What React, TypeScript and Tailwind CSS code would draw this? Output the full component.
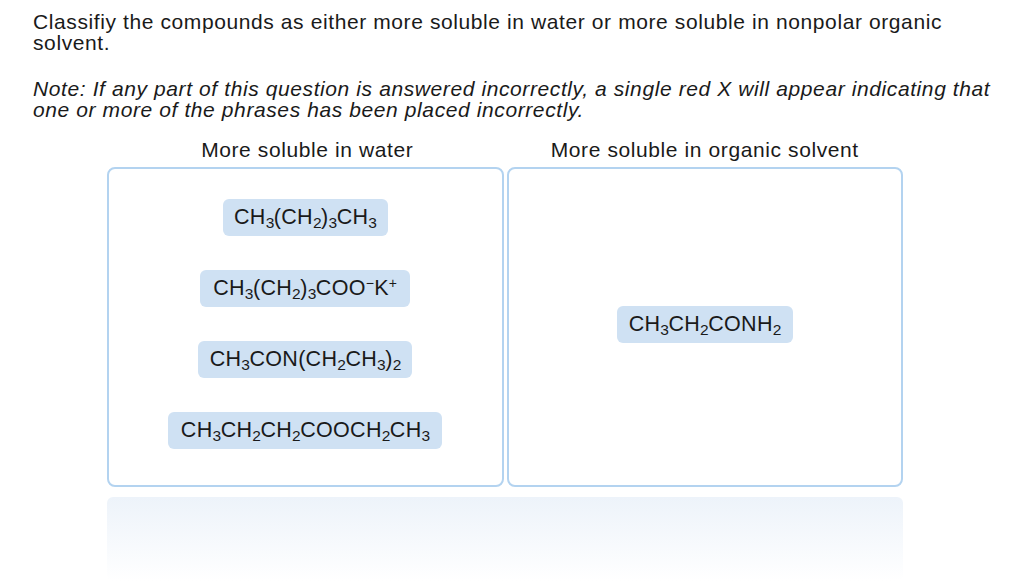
const Sub = ({ children }: { children: React.ReactNode }) => (
	<sub className="text-[15.5px] align-baseline relative top-[4px] leading-none tracking-[-0.5px]">{children}</sub>
);
const Sup = ({ children }: { children: React.ReactNode }) => (
	<sup className="text-[14px] align-baseline relative top-[-7px] leading-none">{children}</sup>
);

const Chip = ({ children, w }: { children: React.ReactNode; w: string }) => (
	<div className={`h-[37px] ${w} rounded-[6px] bg-[#cfe1f3] flex items-center justify-center text-[21.5px] text-[#1a1a1a] tracking-[0.3px]`}>
		<span>{children}</span>
	</div>
);

const App = () => {
	return (
		<div className="w-[1024px] h-[586px] bg-white overflow-hidden font-['Liberation_Sans',Arial,sans-serif] text-[#1a1a1a]">
			{/* Question */}
			<div className="pl-[33px] pt-[11px] text-[21px] leading-[21px] tracking-[0.6px] whitespace-nowrap">
				<p>
					Classifiy the compounds as either more soluble in water or more soluble in nonpolar organic
					<br />
					solvent.
				</p>
				<p className="italic mt-[25px]">
					Note: If any part of this question is answered incorrectly, a single red X will appear indicating that
					<br />
					one or more of the phrases has been placed incorrectly.
				</p>
			</div>

			{/* Columns */}
			<div className="ml-[107px] mt-[18px] w-[796px] flex gap-[3px]">
				<div className="flex-1 flex flex-col">
					<h3 className="text-center text-[21px] leading-[24px] tracking-[0.6px] mb-[5px] pl-[4px]">More soluble in water</h3>
					<div className="h-[320px] border-2 border-[#b3d3f0] rounded-[8px] flex flex-col items-center pt-[30px] gap-[34px]">
						<Chip w="w-[165px]">
							CH<Sub>3</Sub>(CH<Sub>2</Sub>)<Sub>3</Sub>CH<Sub>3</Sub>
						</Chip>
						<Chip w="w-[210px]">
							CH<Sub>3</Sub>(CH<Sub>2</Sub>)<Sub>3</Sub>COO<Sup>−</Sup>K<Sup>+</Sup>
						</Chip>
						<Chip w="w-[214px]">
							CH<Sub>3</Sub>CON(CH<Sub>2</Sub>CH<Sub>3</Sub>)<Sub>2</Sub>
						</Chip>
						<Chip w="w-[274px]">
							CH<Sub>3</Sub>CH<Sub>2</Sub>CH<Sub>2</Sub>COOCH<Sub>2</Sub>CH<Sub>3</Sub>
						</Chip>
					</div>
				</div>
				<div className="flex-1 flex flex-col">
					<h3 className="text-center text-[21px] leading-[24px] tracking-[0.6px] mb-[5px]">More soluble in organic solvent</h3>
					<div className="h-[320px] border-2 border-[#b3d3f0] rounded-[8px] flex items-center justify-center pb-[6px]">
						<Chip w="w-[176px]">
							CH<Sub>3</Sub>CH<Sub>2</Sub>CONH<Sub>2</Sub>
						</Chip>
					</div>
				</div>
			</div>

			{/* Tray */}
			<div className="ml-[107px] mt-[10px] w-[796px] h-[84px] rounded-[6px] bg-gradient-to-b from-[#edf3fa] to-white" />
		</div>
	);
};

export default App;
